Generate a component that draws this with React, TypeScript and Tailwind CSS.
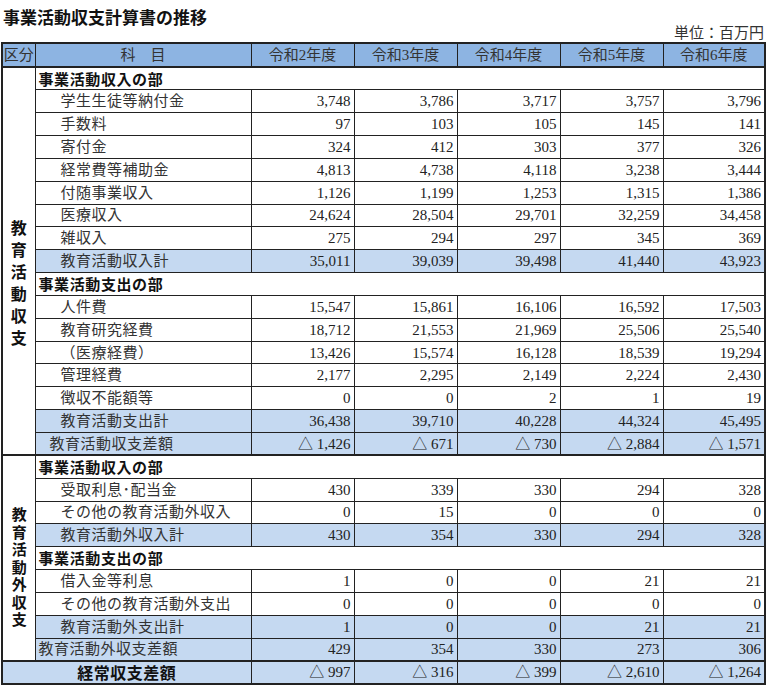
const years = ['令和2年度', '令和3年度', '令和4年度', '令和5年度', '令和6年度']

type Row =
  | { t: 'sec'; label: string }
  | { t: 'item' | 'sub'; label: string; v: string[]; pad?: string }

const sec1: Row[] = [
  { t: 'sec', label: '事業活動収入の部' },
  { t: 'item', label: '学生生徒等納付金', v: ['3,748', '3,786', '3,717', '3,757', '3,796'] },
  { t: 'item', label: '手数料', v: ['97', '103', '105', '145', '141'] },
  { t: 'item', label: '寄付金', v: ['324', '412', '303', '377', '326'] },
  { t: 'item', label: '経常費等補助金', v: ['4,813', '4,738', '4,118', '3,238', '3,444'] },
  { t: 'item', label: '付随事業収入', v: ['1,126', '1,199', '1,253', '1,315', '1,386'] },
  { t: 'item', label: '医療収入', v: ['24,624', '28,504', '29,701', '32,259', '34,458'] },
  { t: 'item', label: '雑収入', v: ['275', '294', '297', '345', '369'] },
  { t: 'sub', label: '教育活動収入計', v: ['35,011', '39,039', '39,498', '41,440', '43,923'] },
  { t: 'sec', label: '事業活動支出の部' },
  { t: 'item', label: '人件費', v: ['15,547', '15,861', '16,106', '16,592', '17,503'] },
  { t: 'item', label: '教育研究経費', v: ['18,712', '21,553', '21,969', '25,506', '25,540'] },
  { t: 'item', label: '（医療経費）', v: ['13,426', '15,574', '16,128', '18,539', '19,294'] },
  { t: 'item', label: '管理経費', v: ['2,177', '2,295', '2,149', '2,224', '2,430'] },
  { t: 'item', label: '徴収不能額等', v: ['0', '0', '2', '1', '19'] },
  { t: 'sub', label: '教育活動支出計', v: ['36,438', '39,710', '40,228', '44,324', '45,495'] },
  { t: 'sub', label: '教育活動収支差額', pad: 'pl-[14px]', v: ['△ 1,426', '△ 671', '△ 730', '△ 2,884', '△ 1,571'] },
]

const sec2: Row[] = [
  { t: 'sec', label: '事業活動収入の部' },
  { t: 'item', label: '受取利息･配当金', v: ['430', '339', '330', '294', '328'] },
  { t: 'item', label: 'その他の教育活動外収入', v: ['0', '15', '0', '0', '0'] },
  { t: 'sub', label: '教育活動外収入計', v: ['430', '354', '330', '294', '328'] },
  { t: 'sec', label: '事業活動支出の部' },
  { t: 'item', label: '借入金等利息', v: ['1', '0', '0', '21', '21'] },
  { t: 'item', label: 'その他の教育活動外支出', v: ['0', '0', '0', '0', '0'] },
  { t: 'sub', label: '教育活動外支出計', v: ['1', '0', '0', '21', '21'] },
  { t: 'sub', label: '教育活動外収支差額', pad: 'pl-[3px]', v: ['429', '354', '330', '273', '306'] },
]

const total = ['△ 997', '△ 316', '△ 399', '△ 2,610', '△ 1,264']

const mincho = "font-['Liberation_Serif','Noto_Sans_CJK_JP',serif]"
const gothic = "font-['Noto_Sans_CJK_JP',sans-serif]"

function Section({ rows, head, text, pt, first }: { rows: Row[]; head: string; text: string; pt: string; first?: boolean }) {
  return (
    <>
      {rows.map((r, i) => {
        const top = i === 0 && !first ? 'border-t-2 border-t-[#222]' : ''
        return (
          <tr key={i} className="h-[22.85px]">
            {i === 0 && (
              <td rowSpan={rows.length} className={`border border-[#222] align-top bg-white ${top}`}>
                <div className={`flex justify-center ${pt}`}>
                  <span className={`[writing-mode:vertical-rl] ${gothic} font-bold ${text} text-[#111]`}>{head}</span>
                </div>
              </td>
            )}
            {r.t === 'sec' ? (
              <td colSpan={6} className={`border border-[#222] pl-[3px] ${gothic} font-bold text-[15px] leading-[18px] tracking-[0.6px] text-[#111] ${top}`}>
                {r.label}
              </td>
            ) : (
              <>
                <td className={`border border-[#222] ${r.pad ?? 'pl-[25px]'} ${mincho} text-[15px] leading-[18px] tracking-[0.5px] text-[#333] whitespace-nowrap ${r.t === 'sub' ? 'bg-[#c5d9f1]' : ''} ${top}`}>
                  {r.label}
                </td>
                {r.v.map((n, k) => (
                  <td key={k} className={`border border-[#222] text-right pr-[3px] ${mincho} text-[15px] leading-[18px] text-[#222] ${r.t === 'sub' ? 'bg-[#c5d9f1]' : ''} ${top}`}>
                    {n}
                  </td>
                ))}
              </>
            )}
          </tr>
        )
      })}
    </>
  )
}

export default function App() {
  return (
    <div className="w-[767px] h-[685px] bg-white overflow-hidden">
      <div className={`pl-[3px] pt-[6px] h-[24px] ${gothic} font-bold text-[17px] leading-[22px] text-[#111]`}>
        事業活動収支計算書の推移
      </div>
      <div className={`h-[18px] pr-[3px] text-right ${mincho} text-[15px] leading-[18px] text-[#333]`}>
        単位：百万円
      </div>
      <table className="ml-px w-[763px] table-fixed border-collapse border-2 border-[#222]">
        <colgroup>
          <col className="w-[33px]" />
          <col className="w-[216px]" />
          <col className="w-[103px]" />
          <col className="w-[103px]" />
          <col className="w-[103px]" />
          <col className="w-[103px]" />
          <col className="w-[102px]" />
        </colgroup>
        <thead>
          <tr className="h-[24px] bg-[#8db4e2]">
            <th className={`border border-[#222] border-b-2 font-normal text-[15px] leading-[18px] ${mincho} text-[#333] px-0`}>区分</th>
            <th className={`border border-[#222] border-b-2 font-normal text-[15px] leading-[18px] ${mincho} text-[#333]`}>科　目</th>
            {years.map((y) => (
              <th key={y} className={`border border-[#222] border-b-2 font-normal text-[15px] leading-[18px] ${mincho} text-[#333]`}>
                {y}
              </th>
            ))}
          </tr>
        </thead>
        <tbody>
          <Section rows={sec1} head="教育活動収支" text="text-[16px] leading-[22px] tracking-[6px]" pt="pt-[152px]" first />
          <Section rows={sec2} head="教育活動外収支" text="text-[15px] leading-[20px] tracking-[2.5px]" pt="pt-[51px]" />
          <tr className="h-[22.85px] bg-[#c5d9f1]">
            <td colSpan={2} className={`border border-[#222] border-t-2 text-center ${gothic} font-bold text-[16px] leading-[18px] tracking-[0.5px] text-[#111]`}>
              経常収支差額
            </td>
            {total.map((n, k) => (
              <td key={k} className={`border border-[#222] border-t-2 text-right pr-[3px] ${mincho} text-[15px] leading-[18px] text-[#222]`}>
                {n}
              </td>
            ))}
          </tr>
        </tbody>
      </table>
    </div>
  )
}
